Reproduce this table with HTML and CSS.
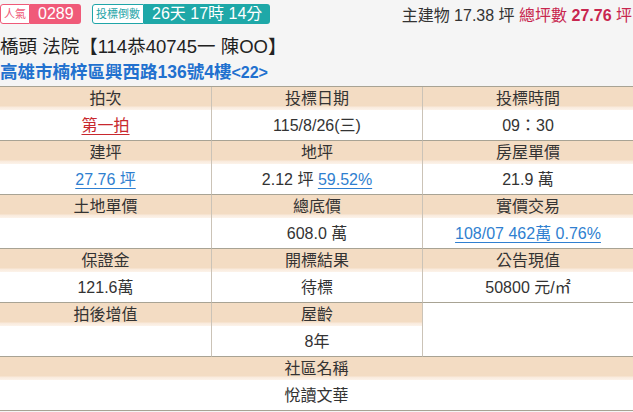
FILE: index.html
```html
<!DOCTYPE html>
<html lang="zh-Hant">
<head>
<meta charset="utf-8">
<link rel="stylesheet" href="styles.css">
</head>
<body>
<div class="top">
  <div class="badges">
    <span class="tag tag-pink">人氣</span><span class="val val-pink">0289</span>
    <span class="tag tag-teal">投標倒數</span><span class="val val-teal">26天 17時 14分</span>
  </div>
  <div class="area">主建物 17.38 坪 <span class="total">總坪數 <b>27.76</b> 坪</span></div>
</div>
<div class="title">橋頭 法院【114恭40745一 陳OO】</div>
<div class="addr">高雄市楠梓區興西路136號4樓<span class="floor">&lt;22&gt;</span></div>
<div class="grid">
  <div class="cell"><div class="h">拍次</div><div class="v"><span class="red">第一拍</span></div></div>
  <div class="cell"><div class="h">投標日期</div><div class="v">115/8/26(三)</div></div>
  <div class="cell"><div class="h">投標時間</div><div class="v">09：30</div></div>

  <div class="cell"><div class="h">建坪</div><div class="v"><span class="link">27.76 坪</span></div></div>
  <div class="cell"><div class="h">地坪</div><div class="v">2.12 坪 <span class="link">59.52%</span></div></div>
  <div class="cell"><div class="h">房屋單價</div><div class="v">21.9 萬</div></div>

  <div class="cell"><div class="h">土地單價</div><div class="v"></div></div>
  <div class="cell"><div class="h">總底價</div><div class="v">608.0 萬</div></div>
  <div class="cell"><div class="h">實價交易</div><div class="v"><span class="link">108/07 462萬 0.76%</span></div></div>

  <div class="cell"><div class="h">保證金</div><div class="v">121.6萬</div></div>
  <div class="cell"><div class="h">開標結果</div><div class="v">待標</div></div>
  <div class="cell"><div class="h">公告現值</div><div class="v">50800 元/㎡</div></div>

  <div class="cell"><div class="h">拍後增值</div><div class="v"></div></div>
  <div class="cell"><div class="h">屋齡</div><div class="v">8年</div></div>
  <div class="cell empty"></div>

  <div class="cell wide"><div class="h">社區名稱</div><div class="v">悅讀文華</div></div>
</div>
</body>
</html>
```

FILE: styles.css
```css
html, body {
  margin: 0;
  padding: 0;
  background: #f5f5f5;
  font-family: "Liberation Sans", "Noto Sans CJK TC", sans-serif;
  color: #333;
}
.top {
  display: flex;
  justify-content: space-between;
  align-items: center;
  height: 26px;
  padding-top: 1px;
}
.badges {
  display: flex;
  align-items: center;
}
.tag {
  box-sizing: border-box;
  height: 20px;
  line-height: 18px;
  font-size: 11px;
  padding: 0 3px;
  background: #fff;
  border: 1px solid;
  border-radius: 3px 0 0 3px;
}
.tag-pink { color: #ef5a78; border-color: #ef5a78; }
.tag-teal { color: #1fa5a8; border-color: #1fa5a8; margin-left: 11px; }
.val {
  height: 20px;
  line-height: 20px;
  font-size: 16px;
  color: #fff;
  padding: 0 8px;
  border-radius: 0 3px 3px 0;
}
.val-pink { background: #f05a79; width: 35px; }
.val-teal { background: #1ea8a8; }
.area {
  font-size: 16px;
  color: #333;
  padding-right: 1px;
}
.total { color: #c8264f; }
.total b { font-weight: bold; }
.title {
  font-size: 18.5px;
  line-height: 22px;
  height: 22px;
  margin-top: 9px;
  color: #222;
}
.addr {
  font-size: 17.5px;
  line-height: 22px;
  height: 22px;
  margin-top: 3px;
  font-weight: bold;
  color: #2271cf;
}
.floor { font-size: 16px; }
.grid {
  margin-top: 3px;
  display: grid;
  grid-template-columns: repeat(3, 1fr);
  border-top: 1px solid #a8a394;
  background: #fff;
  font-size: 16px;
}
.cell {
  border-bottom: 1px solid #a8a394;
  border-left: 1px solid #cbc3b7;
  text-align: center;
}
.cell:nth-child(3n+1) { border-left: none; }
.cell.wide { grid-column: 1 / span 3; border-left: none; }
.h {
  height: 23px;
  line-height: 23px;
  background: linear-gradient(#f3dcc3 0, #f3dcc3 19px, #f9eadc 20px, #fcf3ea 23px);
  color: #333;
}
.v {
  height: 30px;
  line-height: 31px;
  color: #333;
}
.red {
  color: #c8282e;
  text-decoration: underline;
  text-underline-offset: 3px;
}
.link {
  color: #2f7fd0;
  text-decoration: underline;
  text-underline-offset: 3px;
}
```
